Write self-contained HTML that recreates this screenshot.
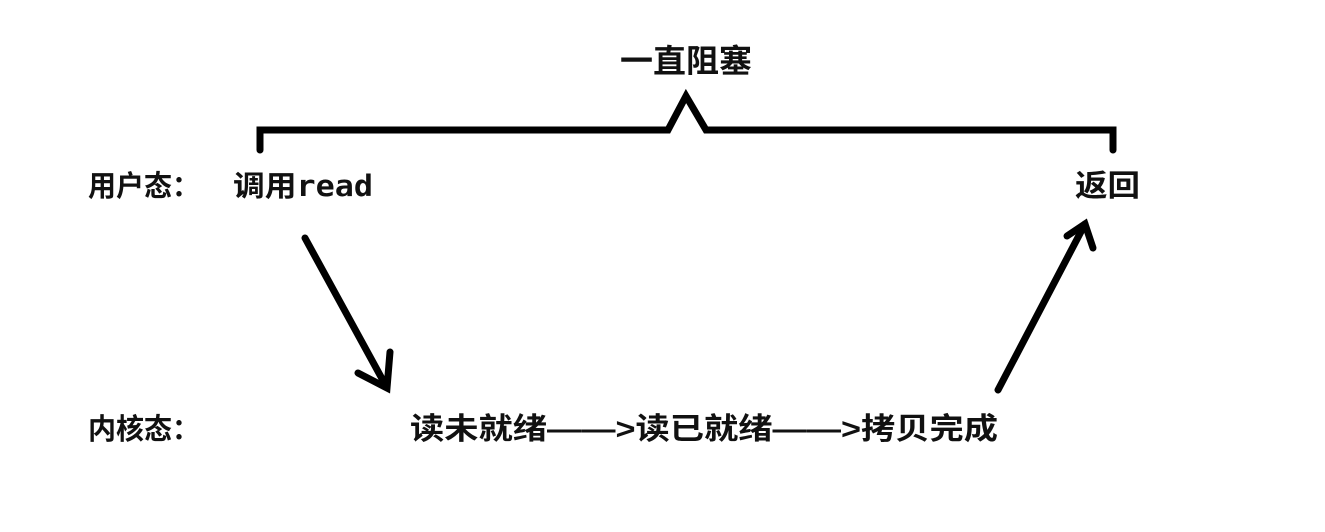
<!DOCTYPE html>
<html><head><meta charset="utf-8"><style>
html,body{margin:0;padding:0;background:#fff;width:1325px;height:532px;overflow:hidden}
svg text{font-family:"Liberation Sans","Noto Sans CJK SC",sans-serif;font-weight:bold;fill:#111}
</style></head><body>
<svg width="1325" height="532" viewBox="0 0 1325 532" xmlns="http://www.w3.org/2000/svg">
<g fill="none" stroke="#000" stroke-width="7" stroke-linecap="round" stroke-linejoin="miter">
<path d="M260,150 V130 H668 L686,96 L706,130 H1113 V150"/>
<path d="M305,238 L386,386"/>
<path d="M358,373 L387,388 L390,352"/>
<path d="M998,390 L1085,224"/>
<path d="M1067,236 L1085,224 L1093,248"/>
</g>
<text x="620" y="72" font-size="32" textLength="132" lengthAdjust="spacingAndGlyphs">一直阻塞</text>
<text x="88" y="196" font-size="29" textLength="112" lengthAdjust="spacingAndGlyphs">用户态：</text>
<text x="233" y="196" font-size="29" textLength="140" lengthAdjust="spacingAndGlyphs">调用<tspan font-family="DejaVu Sans Mono,monospace">read</tspan></text>
<text x="1075" y="196" font-size="30" textLength="65" lengthAdjust="spacingAndGlyphs">返回</text>
<text x="88" y="439" font-size="29" textLength="112" lengthAdjust="spacingAndGlyphs">内核态：</text>
<text x="410" y="439" font-size="30" textLength="588" lengthAdjust="spacingAndGlyphs">读未就绪——&gt;读已就绪——&gt;拷贝完成</text>
</svg>
</body></html>
